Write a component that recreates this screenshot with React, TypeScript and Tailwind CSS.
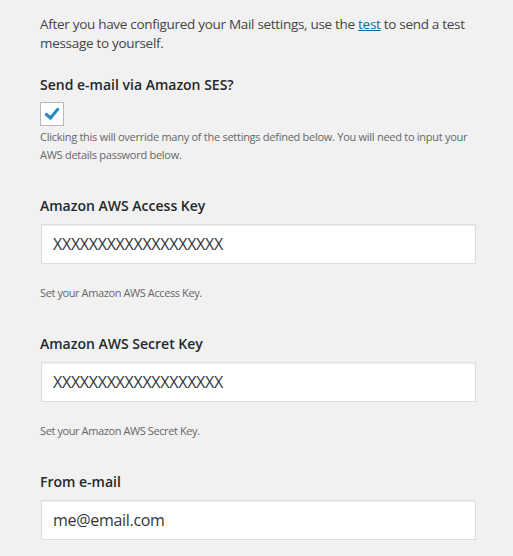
const font = "font-['Open_Sans','Liberation_Sans',sans-serif]";

function Field({ label, value, help }: { label: string; value: string; help?: string }) {
  return (
    <div className="mt-[32px]">
      <h3 className="text-[14px] leading-[20px] font-semibold text-[#23282d]">{label}</h3>
      <div className="mt-[8px] w-[435px] h-[40px] ml-[1px] bg-white border border-[#dddddd] shadow-[inset_0_1px_2px_rgba(0,0,0,0.07)] flex items-center px-[11px]">
        <span className="text-[16px] tracking-[-0.3px] text-[#32373c]">{value}</span>
      </div>
      {help && <p className="mt-[20px] text-[11px] leading-[18px] tracking-[-0.4px] text-[#666666]">{help}</p>}
    </div>
  );
}

export default function App() {
  return (
    <div className={`min-h-[556px] w-[513px] bg-[#f1f1f1] pl-[40px] pt-[15px] ${font}`}>
      <p className="text-[13.5px] leading-[19px] tracking-[-0.3px] text-[#444444] w-[440px]">
        After you have configured your Mail settings, use the{" "}
        <a href="#" className="text-[#0073aa] underline">test</a> to send a test message to yourself.
      </p>

      <h3 className="mt-[22px] text-[14px] leading-[20px] font-semibold text-[#23282d]">
        Send e-mail via Amazon SES?
      </h3>
      <div className="mt-[7px] w-[24px] h-[24px] bg-white border border-[#b4b9be] flex items-center justify-center">
        <svg width="16" height="16" viewBox="0 0 16 16">
          <path d="M2.5 8.5 L6.5 12 L13.5 3.5" fill="none" stroke="#1e8cbe" strokeWidth="3" strokeLinecap="square" />
        </svg>
      </div>
      <p className="mt-[2px] text-[11px] leading-[18px] tracking-[-0.27px] text-[#666666] w-[440px]">
        Clicking this will override many of the settings defined below. You will need to input your AWS details password below.
      </p>

      <Field label="Amazon AWS Access Key" value="XXXXXXXXXXXXXXXXXXX" help="Set your Amazon AWS Access Key." />
      <Field label="Amazon AWS Secret Key" value="XXXXXXXXXXXXXXXXXXX" help="Set your Amazon AWS Secret Key." />
      <Field label="From e-mail" value="me@email.com" />
    </div>
  );
}
